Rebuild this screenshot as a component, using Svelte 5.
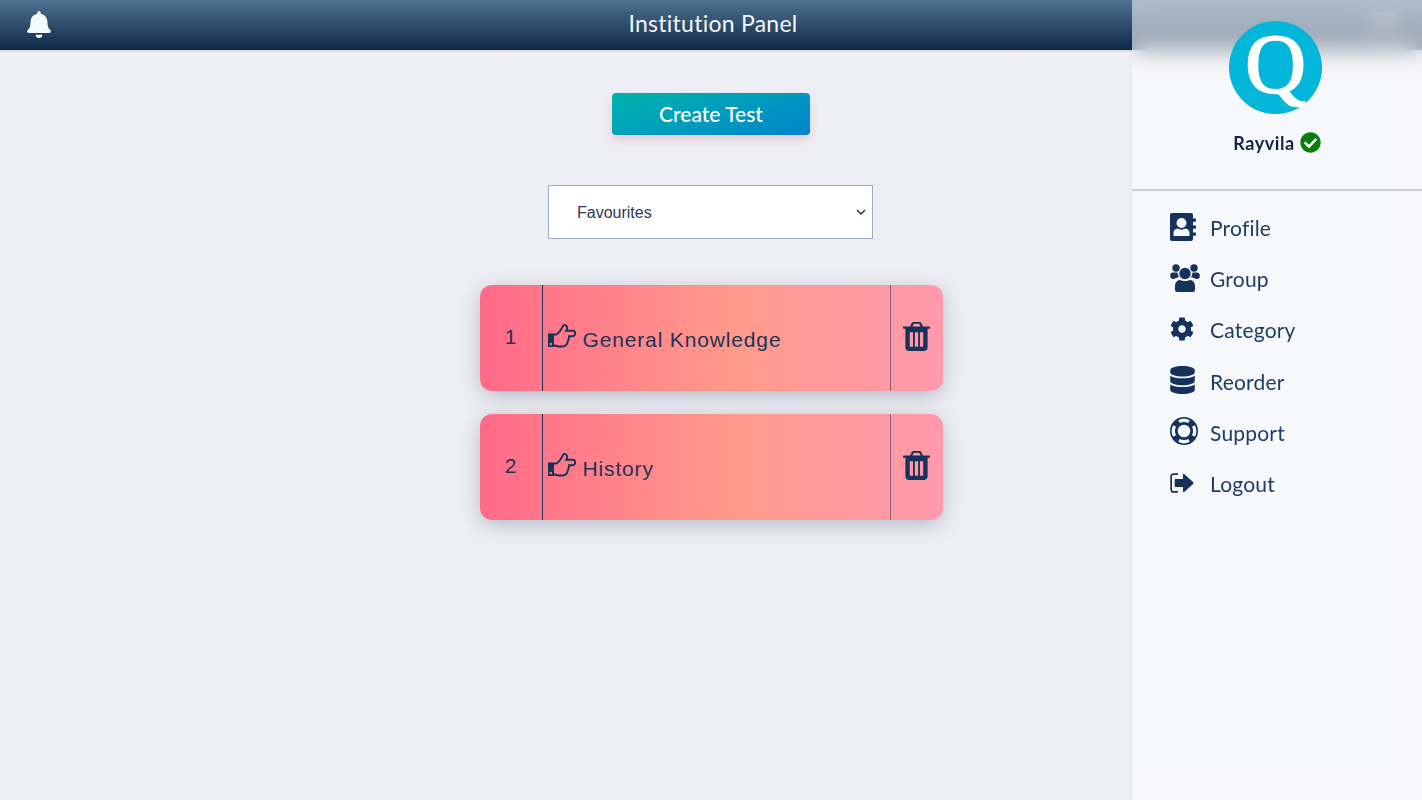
<script>
	let tests = [
		{ id: 1, name: 'General Knowledge' },
		{ id: 2, name: 'History' }
	];

	let menu = [
		{
			label: 'Profile',
			w: 26,
			h: 28,
			d: 'M2 0H21C22.1 0 23 .9 23 2V26C23 27.1 22.1 28 21 28H2C.9 28 0 27.1 0 26V2C0 .9 .9 0 2 0ZM11.500 5a5 5 0 1 0 0 10a5 5 0 1 0 0-10ZM3.500 22V19.500C3.500 17.500 5.500 15.800 7.500 15.500C10 17 13 17 15.500 15.500C17.500 15.800 19.500 17.500 19.500 19.500V22C19.500 22.600 19.100 23 18.500 23H4.500C3.900 23 3.500 22.600 3.500 22ZM23 5.500h2c.6 0 1 .4 1 1v1.200c0 .6-.4 1-1 1h-2zM23 12.500h2c.6 0 1 .4 1 1v1.200c0 .6-.4 1-1 1h-2zM23 19.500h2c.6 0 1 .4 1 1v1.200c0 .6-.4 1-1 1h-2z'
		},
		{
			label: 'Group',
			w: 30,
			h: 28,
			d: 'M6 .3a3.700 3.700 0 1 0 0 7.400a3.700 3.700 0 1 0 0-7.400ZM24 .3a3.700 3.700 0 1 0 0 7.400a3.700 3.700 0 1 0 0-7.400ZM15 3.800a5.700 5.700 0 1 0 0 11.400a5.700 5.700 0 1 0 0-11.400ZM5 26V22C5 18.500 7.500 16 10 16C12.500 17.500 17.500 17.500 20 16C22.500 16 25 18.500 25 22V26C25 27.200 24 28 23 28H7C6 28 5 27.200 5 26ZM3 8.500H7.500C7.800 10.500 8.300 12 9 13.200C7 13.500 5 14.500 4.200 15H3C1.300 15 .2 13.800 .2 12.200V11.300C.2 9.700 1.300 8.500 3 8.500ZM27 8.500H22.500C22.200 10.500 21.700 12 21 13.200C23 13.500 25 14.500 25.800 15H27C28.700 15 29.800 13.800 29.800 12.200V11.300C29.800 9.700 28.700 8.500 27 8.500Z'
		},
		{
			label: 'Category',
			w: 24,
			h: 24,
			box: '0 0 512 512',
			d: 'M487.4 315.7l-42.6-24.6c4.3-23.2 4.3-47 0-70.2l42.6-24.6c4.9-2.8 7.1-8.6 5.5-14-11.1-35.6-30-67.8-54.7-94.6-3.8-4.1-10-5.1-14.8-2.3L380.8 110c-17.9-15.4-38.5-27.3-60.8-35.1V25.8c0-5.6-3.9-10.5-9.4-11.7-36.7-8.2-74.3-7.8-109.2 0-5.5 1.2-9.4 6.1-9.4 11.7V75c-22.2 7.9-42.8 19.8-60.8 35.1L88.7 85.5c-4.9-2.8-11-1.9-14.8 2.3-24.7 26.7-43.6 58.9-54.7 94.6-1.7 5.4.6 11.2 5.5 14L67.3 221c-4.3 23.2-4.3 47 0 70.2l-42.6 24.6c-4.9 2.8-7.1 8.6-5.5 14 11.1 35.6 30 67.8 54.7 94.6 3.8 4.1 10 5.1 14.8 2.3l42.6-24.6c17.9 15.4 38.5 27.3 60.8 35.1v49.2c0 5.6 3.9 10.5 9.4 11.7 36.7 8.2 74.3 7.8 109.2 0 5.5-1.2 9.4-6.1 9.4-11.7v-49.2c22.2-7.9 42.8-19.8 60.8-35.1l42.6 24.6c4.9 2.8 11 1.9 14.8-2.3 24.7-26.7 43.6-58.9 54.7-94.6 1.5-5.5-.7-11.3-5.6-14.1zM256 336c-44.1 0-80-35.9-80-80s35.9-80 80-80 80 35.9 80 80-35.9 80-80 80z'
		},
		{
			label: 'Reorder',
			w: 25,
			h: 28,
			box: '0 0 448 512',
			d: 'M448 73.143v45.714C448 159.143 347.667 192 224 192S0 159.143 0 118.857V73.143C0 32.857 100.333 0 224 0s224 32.857 224 73.143zM448 176v102.857C448 319.143 347.667 352 224 352S0 319.143 0 278.857V176c48.125 33.143 136.208 48.572 224 48.572S399.874 209.143 448 176zm0 160v102.857C448 479.143 347.667 512 224 512S0 479.143 0 438.857V336c48.125 33.143 136.208 48.572 224 48.572S399.874 369.143 448 336z'
		},
		{
			label: 'Support',
			w: 28,
			h: 28,
			d: 'M14 0a14 14 0 1 0 0 28a14 14 0 1 0 0-28ZM14 7.700a6.300 6.300 0 1 0 0 12.600a6.300 6.300 0 1 0 0-12.600ZM8.230 3.140A12.300 12.300 0 0 1 19.770 3.140L18.230 6.050A9 9 0 0 0 9.770 6.050ZM24.860 8.230A12.300 12.300 0 0 1 24.860 19.770L21.950 18.230A9 9 0 0 0 21.950 9.770ZM19.770 24.860A12.300 12.300 0 0 1 8.230 24.860L9.770 21.950A9 9 0 0 0 18.230 21.950ZM3.140 19.770A12.300 12.300 0 0 1 3.140 8.230L6.050 9.770A9 9 0 0 0 6.050 18.230Z'
		},
		{
			label: 'Logout',
			w: 24,
			h: 20,
			d: 'M8 .2V1.900H3.600C2.600 1.900 2 2.600 2 3.600V16.400C2 17.400 2.600 18.100 3.600 18.100H8V19.800H3.600C1.600 19.800 .3 18.400 .3 16.400V3.600C.3 1.600 1.600 .2 3.600 .2ZM5.500 6H13V1.500C13 .8 13.700 .5 14.200 1L23.300 9.300C23.700 9.700 23.700 10.300 23.300 10.700L14.200 19C13.700 19.500 13 19.200 13 18.500V14H5.500C5 14 4.700 13.700 4.700 13.200V6.800C4.700 6.300 5 6 5.500 6Z'
		}
	];
</script>

<div class="page">
	<header class="topbar">
		<svg class="bell" viewBox="0 0 448 512">
			<path
				d="M224 512c35.32 0 63.97-28.65 63.97-64H160.03c0 35.35 28.65 64 63.97 64zm215.39-149.71c-19.32-20.76-55.47-51.99-55.47-154.29 0-77.7-54.48-139.9-127.94-155.16V32c0-17.67-14.32-32-31.98-32s-31.98 14.33-31.98 32v20.84C118.56 68.1 64.08 130.3 64.08 208c0 102.3-36.15 133.53-55.47 154.29-6 6.45-8.66 14.16-8.61 21.71.11 16.4 12.98 32 32.1 32h383.8c19.12 0 32-15.6 32.1-32 .05-7.55-2.61-15.27-8.61-21.71z"
			/>
		</svg>
		<h1>Institution Panel</h1>
		<!-- sits behind the blurred sidebar -->
		<div class="toggle"></div>
	</header>

	<main class="content">
		<button class="create">Create Test</button>

		<select class="filter">
			<option>Favourites</option>
			<option>All</option>
		</select>

		<div class="list">
			{#each tests as test}
				<div class="card">
					<div class="num">{test.id}</div>
					<div class="name">
						<svg class="hand" viewBox="0 0 28 24">
							<path class="cuff" d="M0 9.500H6V23H0ZM2.800 18.800a1.300 1.300 0 1 0 0 2.600a1.300 1.300 0 1 0 0-2.600Z" />
							<path
								class="outline"
								d="M6 10.500H8.500C10.500 9.500 13 6 14.800 2.200C15.400 1 16.800 .8 17.800 1.400C19.300 2.300 19.700 4.400 18.300 6.700H24.800C26.300 6.700 27.200 8 27.200 9.400C27.200 11 26 12.200 24.600 12.200H21C21 14 20.600 15.600 20 17C19.300 20 17.600 22.500 14.800 22.500H11C9 22.500 7.500 21.500 6 21.200"
							/>
						</svg>
						<span>{test.name}</span>
					</div>
					<div class="del">
						<svg class="trash" viewBox="0 0 28 30">
							<path
								fill-rule="evenodd"
								d="M.7 4.700H7.300L8.800 1.500C9.200 .6 10 0 11 0H17C18 0 18.800 .6 19.200 1.500L20.700 4.700H27.300C27.700 4.700 28 5 28 5.400V6.300C28 6.700 27.700 7 27.300 7H25.500V26.500C25.500 28.500 24 30 22.300 30H5.700C4 30 2.500 28.500 2.500 26.500V7H.7C.3 7 0 6.700 0 6.300V5.400C0 5 .3 4.700 .7 4.700ZM9.800 4.700H18.200L17.200 2.400C17 2 16.700 1.800 16.300 1.800H11.700C11.300 1.800 11 2 10.800 2.400ZM7 10.500h3.400v15H7ZM12.300 10.500h3.400v15h-3.400ZM17.600 10.500h3.400v15h-3.400Z"
							/>
						</svg>
					</div>
				</div>
			{/each}
		</div>
	</main>

	<aside class="sidebar">
		<div class="user">
			<div class="avatar"><span>Q</span></div>
			<div class="username">
				<span>Rayvila</span>
				<svg class="verified" viewBox="0 0 512 512">
					<path
						d="M504 256c0 136.967-111.033 248-248 248S8 392.967 8 256 119.033 8 256 8s248 111.033 248 248zM227.314 387.314l184-184c6.248-6.248 6.248-16.379 0-22.627l-22.627-22.627c-6.248-6.249-16.379-6.249-22.628 0L216 308.118l-70.059-70.059c-6.248-6.248-16.379-6.248-22.628 0l-22.627 22.627c-6.248 6.248-6.248 16.379 0 22.627l104 104c6.249 6.249 16.379 6.249 22.628.001z"
					/>
				</svg>
			</div>
		</div>
		<nav class="menu">
			{#each menu as item}
				<div class="item">
					<span class="ico">
						<svg width={item.w} height={item.h} viewBox={item.box || `0 0 ${item.w} ${item.h}`}>
							<path fill-rule="evenodd" d={item.d} />
						</svg>
					</span>
					<span>{item.label}</span>
				</div>
			{/each}
		</nav>
	</aside>
</div>

<style>
	:global(body) {
		margin: 0;
		background: #eeeff5;
	}

	.page {
		position: relative;
		height: 800px;
		overflow: hidden;
	}

	.topbar {
		position: relative;
		height: 50px;
		display: flex;
		align-items: center;
		justify-content: center;
		background: linear-gradient(#4f7191, #0f2847);
		box-shadow: 0 1px 2px rgba(60, 20, 60, 0.2);
	}

	.topbar h1 {
		margin: 0 0 4px 4px;
		font: 400 23px 'Lato', sans-serif;
		letter-spacing: 0.25px;
		color: #f2f8fb;
	}

	.bell {
		position: absolute;
		left: 26px;
		top: 11px;
		width: 26px;
		height: 27px;
		fill: #f4fbfd;
	}

	.toggle {
		position: absolute;
		right: 26px;
		top: 12px;
		width: 22px;
		height: 18px;
		background: rgba(255, 255, 255, 0.3);
	}

	.content {
		display: flex;
		flex-direction: column;
		align-items: center;
	}

	.create {
		margin-top: 43px;
		width: 198px;
		height: 42px;
		padding: 0 0 2px;
		border: none;
		border-radius: 4px;
		background: linear-gradient(160deg, #00b4ad, #0085cc);
		color: #fff;
		font: 500 21px 'Lato', sans-serif;
		box-shadow: 0 5px 10px rgba(215, 130, 150, 0.35);
	}

	.filter {
		appearance: none;
		margin: 50px 1px 0 0;
		width: 325px;
		height: 54px;
		padding-left: 28px;
		background: #fff
			url("data:image/svg+xml,%3Csvg xmlns='http://www.w3.org/2000/svg' width='10' height='6'%3E%3Cpath d='M1 1l4 4 4-4' fill='none' stroke='%232a3350' stroke-width='1.500'/%3E%3C/svg%3E")
			no-repeat right 6px center;
		border: 1px solid #a3aec6;
		border-radius: 0;
		color: #2f3855;
		font: 16px 'Liberation Sans', sans-serif;
	}

	.list {
		margin-top: 46px;
		display: flex;
		flex-direction: column;
		gap: 23px;
	}

	.card {
		width: 463px;
		height: 106px;
		display: flex;
		border-radius: 12px;
		overflow: hidden;
		background: linear-gradient(90deg, #ff6a88 0%, #ff9a8b 55%, #ff99ac 100%);
		box-shadow: 0 5px 20px rgba(60, 65, 90, 0.3);
		color: #1f3358;
		font-family: 'Liberation Sans', sans-serif;
	}

	.num {
		width: 63px;
		display: flex;
		align-items: center;
		justify-content: center;
		padding-bottom: 3px;
		box-sizing: border-box;
		font-size: 21px;
		border-right: 1px solid #1f3358;
	}

	.name {
		flex: 1;
		display: flex;
		align-items: center;
		padding-left: 5px;
		gap: 7px;
		font-size: 21px;
		letter-spacing: 0.85px;
	}

	.name span {
		margin-top: 4px;
	}

	.hand {
		width: 28px;
		height: 24px;
		margin-bottom: 4px;
	}

	.cuff {
		fill: #14325a;
		fill-rule: evenodd;
	}

	.outline {
		fill: none;
		stroke: #14325a;
		stroke-width: 1.9;
	}

	.del {
		width: 53px;
		display: flex;
		align-items: center;
		justify-content: center;
		border-left: 1px solid rgba(31, 51, 88, 0.55);
		box-sizing: border-box;
	}

	.trash {
		width: 27px;
		height: 29px;
		fill: #14325a;
		margin-bottom: 3px;
	}

	.sidebar {
		position: absolute;
		top: 0;
		right: 0;
		bottom: 0;
		width: 290px;
		background: rgba(255, 255, 255, 0.55);
		backdrop-filter: blur(12px);
		box-shadow: -1px 0 3px rgba(80, 90, 120, 0.06);
	}

	.user {
		height: 189px;
		border-bottom: 2px solid #cfd0d3;
		display: flex;
		flex-direction: column;
		align-items: center;
	}

	.avatar {
		margin: 21px 3px 0 0;
		width: 93px;
		height: 93px;
		border-radius: 50%;
		background: #02b5d9;
		color: #fff;
		display: flex;
		justify-content: center;
		font: 84px/93px 'Liberation Serif', serif;
		-webkit-text-stroke: 2px #fff;
	}

	.avatar span {
		margin-top: -3px;
	}

	.username {
		margin-top: 16px;
		display: flex;
		align-items: center;
		gap: 5px;
		color: #10234a;
		font: 700 18px 'Lato', sans-serif;
		letter-spacing: 0.6px;
	}

	.username span {
		padding-top: 2px;
	}

	.verified {
		width: 21px;
		height: 21px;
		fill: #0a7d0a;
		margin-top: 1px;
	}

	.menu {
		padding: 11px 0 0 38px;
		display: flex;
		flex-direction: column;
	}

	.item {
		height: 51.2px;
		display: flex;
		align-items: center;
		color: #1e3d63;
		font: 400 21px 'Lato', sans-serif;
		letter-spacing: 0.2px;
	}

	.ico {
		width: 40px;
		display: flex;
		align-items: center;
		margin-bottom: 2px;
	}

	.ico svg {
		fill: #14325a;
	}
</style>
